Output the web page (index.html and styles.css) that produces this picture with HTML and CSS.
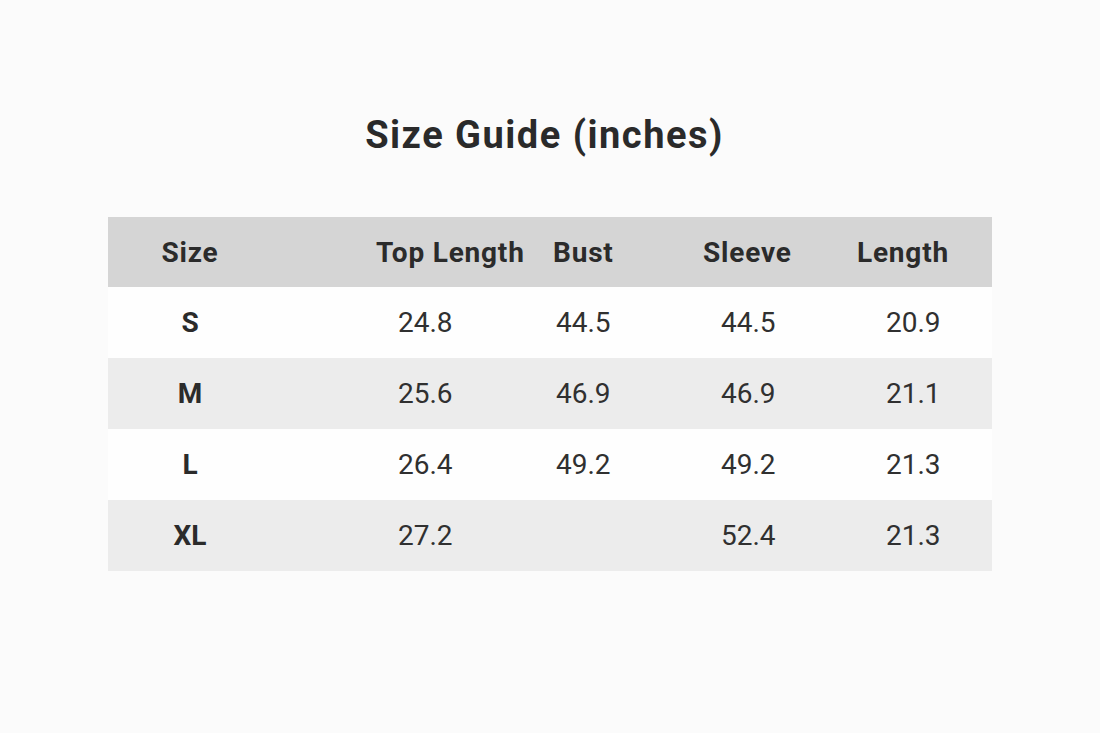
FILE: index.html
```html
<!DOCTYPE html>
<html>
<head>
<meta charset="utf-8">
<link rel="stylesheet" href="styles.css">
</head>
<body>
<div class="page">
  <h1 class="title">Size Guide (inches)</h1>
  <div class="table">
    <div class="row head">
      <div class="c c1">Size</div>
      <div class="c c2">Top Length</div>
      <div class="c c3">Bust</div>
      <div class="c c4">Sleeve</div>
      <div class="c c5">Length</div>
    </div>
    <div class="row">
      <div class="c c1 lbl">S</div>
      <div class="c c2">24.8</div>
      <div class="c c3">44.5</div>
      <div class="c c4">44.5</div>
      <div class="c c5">20.9</div>
    </div>
    <div class="row alt">
      <div class="c c1 lbl">M</div>
      <div class="c c2">25.6</div>
      <div class="c c3">46.9</div>
      <div class="c c4">46.9</div>
      <div class="c c5">21.1</div>
    </div>
    <div class="row">
      <div class="c c1 lbl">L</div>
      <div class="c c2">26.4</div>
      <div class="c c3">49.2</div>
      <div class="c c4">49.2</div>
      <div class="c c5">21.3</div>
    </div>
    <div class="row alt">
      <div class="c c1 lbl">XL</div>
      <div class="c c2">27.2</div>
      <div class="c c3"></div>
      <div class="c c4">52.4</div>
      <div class="c c5">21.3</div>
    </div>
  </div>
</div>
</body>
</html>
```
FILE: styles.css
```css
html, body {
  margin: 0;
  padding: 0;
  background: #fbfbfb;
}
body {
  font-family: Roboto, "Liberation Sans", sans-serif;
  color: #2b2b2b;
  width: 1100px;
  height: 733px;
  overflow: hidden;
}
.page {
  display: flex;
  flex-direction: column;
  align-items: center;
  padding-top: 112px;
}
.title {
  margin: 0 11px 0 0;
  font-size: 38px;
  line-height: 46px;
  letter-spacing: 1.5px;
  font-weight: 700;
  color: #2a2a2a;
}
.table {
  margin-top: 59px;
  width: 884px;
  display: flex;
  flex-direction: column;
}
.row {
  display: grid;
  grid-template-columns: 164px 268px 120px 170px 162px;
  height: 71px;
  align-items: center;
  background: #fefefe;
  font-size: 28px;
  color: #303030;
}
.row.alt {
  background: #ececec;
}
.row.head {
  height: 70px;
  background: #d5d5d5;
  font-weight: 700;
  font-size: 28px;
  letter-spacing: 0.8px;
  color: #2b2b2b;
}
.c {
  white-space: nowrap;
}
.c1 {
  text-align: center;
}
.lbl {
  font-weight: 700;
  font-size: 28px;
  color: #2b2b2b;
}
.row .c2 { padding-left: 126px; }
.row .c3 { padding-left: 16px; }
.row .c4 { padding-left: 61px; }
.row .c5 { padding-left: 56px; }
.row.head .c2 { padding-left: 104px; }
.row.head .c3 { padding-left: 13px; }
.row.head .c4 { padding-left: 43px; }
.row.head .c5 { padding-left: 27px; }
```
